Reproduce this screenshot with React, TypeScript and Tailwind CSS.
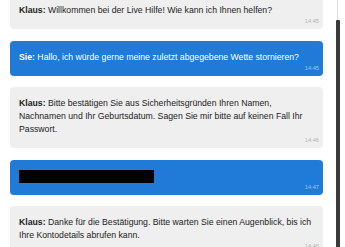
import React from "react";

type Msg = { who: string; text?: string; time: string; me?: boolean; redacted?: boolean };

const msgs: Msg[] = [
  { who: "Klaus:", text: "Willkommen bei der Live Hilfe! Wie kann ich Ihnen helfen?", time: "14:45" },
  { who: "Sie:", text: "Hallo, ich würde gerne meine zuletzt abgegebene Wette stornieren?", time: "14:45", me: true },
  {
    who: "Klaus:",
    text: "Bitte bestätigen Sie aus Sicherheitsgründen Ihren Namen, Nachnamen und Ihr Geburtsdatum. Sagen Sie mir bitte auf keinen Fall Ihr Passwort.",
    time: "14:46",
  },
  { who: "", time: "14:47", me: true, redacted: true },
  {
    who: "Klaus:",
    text: "Danke für die Bestätigung. Bitte warten Sie einen Augenblick, bis ich Ihre Kontodetails abrufen kann.",
    time: "14:48",
  },
];

function Bubble({ m }: { m: Msg }) {
  return (
    <div
      className={
        "rounded-[4px] pl-[9px] pr-[4px] pt-[10px] pb-[4px] " +
        (m.me ? "bg-[#1f7ad8] text-white" : "bg-[#efefef] text-[#222222]")
      }
    >
      <div className="pr-[6px] text-[8.7px] leading-[13px]">
        {m.redacted ? (
          <span className="block h-[13px] w-[135px] bg-black" />
        ) : (
          <>
            <span className="font-bold">{m.who}</span> {m.text}
          </>
        )}
      </div>
      <div
        className={
          "h-[8px] text-right text-[5.7px] leading-[8px] " + (m.me ? "text-[#9cc6f2]" : "text-[#b4b4b4]")
        }
      >
        {m.time}
      </div>
    </div>
  );
}

export default function App() {
  return (
    <div
      className="flex h-[247px] w-[345px] overflow-hidden bg-white"
      style={{ fontFamily: '"Liberation Sans", Arial, Helvetica, sans-serif' }}
    >
      <div className="w-[336px] overflow-hidden pl-[10px] pr-[13px]">
        <div className="mt-[-6px] flex flex-col gap-[11.5px]">
          {msgs.map((m, i) => (
            <Bubble key={i} m={m} />
          ))}
        </div>
      </div>
      <div className="flex w-[4px] flex-col">
        <div className="ml-[1px] h-[20px] w-[1px] bg-[#dddddd]" />
        <div className="flex-1 rounded-t-[1px] bg-[#3a3a3a]" />
      </div>
      <div className="flex-1 bg-white" />
    </div>
  );
}
